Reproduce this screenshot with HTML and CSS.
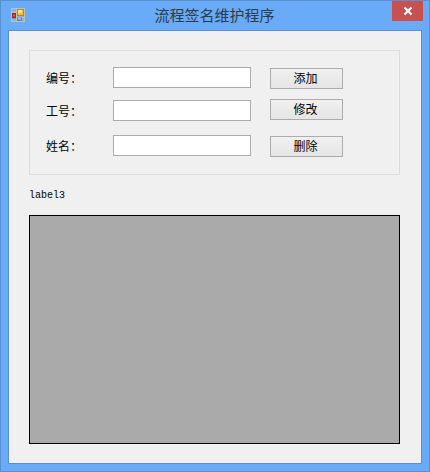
FILE: index.html
```html
<!DOCTYPE html>
<html lang="zh">
<head>
<meta charset="utf-8">
<title>流程签名维护程序</title>
<link rel="stylesheet" href="styles.css">
</head>
<body>
<div class="window">
  <header class="titlebar">
    <div class="title-left">
      <svg class="app-icon" width="14" height="14" viewBox="0 0 14 14">
        <rect x="0.5" y="0.5" width="13" height="13" fill="#84b4ea" stroke="#c2c2b2"/>
        <path d="M0 4.5H5M5.5 0V14M0 9.5H14" stroke="#c2c2b2" fill="none"/>
        <rect x="1.3" y="5.3" width="3.4" height="4.6" fill="#c4201c" stroke="#8e1512" stroke-width="0.6"/>
        <rect x="2.5" y="6.5" width="1" height="2" fill="#e8a8a0"/>
        <rect x="6.4" y="1.4" width="6.2" height="6.2" fill="#f6c02c" stroke="#a67c28" stroke-width="0.8"/>
        <rect x="7" y="2" width="4" height="3" fill="#fbe38a"/>
        <rect x="6" y="9.5" width="5" height="3.5" fill="#4f86d8"/>
        <rect x="7" y="10" width="3" height="1.5" fill="#a8c6ee"/>
      </svg>
    </div>
    <h1 class="title">流程签名维护程序</h1>
    <div class="title-right">
      <div class="close">
        <svg width="10" height="10" viewBox="0 0 10 10"><path d="M1.5 1.5L8.5 8.5M8.5 1.5L1.5 8.5" stroke="#fff" stroke-width="2.2" fill="none"/></svg>
      </div>
    </div>
  </header>
  <main class="client">
    <section class="group">
      <div class="row row-one">
        <label class="field-label">编号：</label>
        <input class="textbox" type="text">
        <button class="btn btn-one">添加</button>
      </div>
      <div class="row row-two">
        <label class="field-label">工号：</label>
        <input class="textbox" type="text">
        <button class="btn btn-two">修改</button>
      </div>
      <div class="row row-three">
        <label class="field-label">姓名：</label>
        <input class="textbox" type="text">
        <button class="btn btn-three">删除</button>
      </div>
    </section>
    <div class="label3">label3</div>
    <div class="picture"></div>
  </main>
</div>
</body>
</html>
```
FILE: styles.css
```css
* {
  box-sizing: border-box;
}
html, body {
  margin: 0;
  padding: 0;
}
body {
  width: 430px;
  height: 472px;
  overflow: hidden;
  font-family: "Noto Sans CJK SC", "Liberation Sans", sans-serif;
  font-size: 12px;
  color: #000;
}
.window {
  width: 430px;
  height: 472px;
  background: #69abf6;
  border: 1px solid #5b8fce;
  display: flex;
  flex-direction: column;
}
.titlebar {
  height: 29px;
  flex: none;
  display: grid;
  grid-template-columns: 1fr auto 1fr;
  padding-right: 6px;
}
.title-left {
  padding: 7px 0 0 10px;
}
.app-icon {
  display: block;
}
.title {
  margin: 0 0 0 5px;
  font-size: 15px;
  font-weight: 400;
  line-height: 20px;
  padding-top: 4px;
  color: #2c3a4a;
}
.title-right {
  display: flex;
  justify-content: flex-end;
}
.close {
  width: 31px;
  height: 20px;
  background: #c75050;
  display: flex;
  align-items: center;
  justify-content: center;
}
.client {
  flex: 1;
  margin: 0 7px 7px;
  background: #f0f0f0;
  border: 1px solid #5b8fce;
  padding: 19px 21px 0 20px;
  display: flex;
  flex-direction: column;
}
.group {
  height: 125px;
  flex: none;
  border: 1px solid #dcdcdc;
  padding-left: 16px;
}
.row {
  display: flex;
  align-items: flex-start;
  height: 21px;
}
.row-one {
  margin-top: 16px;
}
.row-two {
  margin-top: 12px;
}
.row-three {
  margin-top: 14px;
}
.field-label {
  width: 67px;
  flex: none;
  line-height: 21px;
  color: #000;
}
.textbox {
  width: 138px;
  height: 21px;
  flex: none;
  margin: 0 19px 0 0;
  padding: 0;
  background: #fff;
  border: 1px solid #aaaaaa;
  border-radius: 0;
  outline: none;
}
.btn {
  width: 73px;
  height: 21px;
  flex: none;
  padding: 0 2px 2px 0;
  font: inherit;
  line-height: 17px;
  color: #000;
  background: linear-gradient(#f0f0f0, #e5e5e5);
  border: 1px solid #acacac;
  border-radius: 0;
}
.btn-one {
  margin-top: 1px;
}
.btn-two {
  margin-top: -1px;
}
.btn-three {
  margin-top: 1px;
}
.label3 {
  flex: none;
  margin-top: 14px;
  height: 16px;
  line-height: 14px;
  font-family: "Liberation Mono", "DejaVu Sans Mono", monospace;
  font-size: 10px;
  color: #000;
}
.picture {
  width: 371px;
  height: 229px;
  flex: none;
  margin-top: 10px;
  background: #aaaaaa;
  border: 1px solid #000;
}
```
